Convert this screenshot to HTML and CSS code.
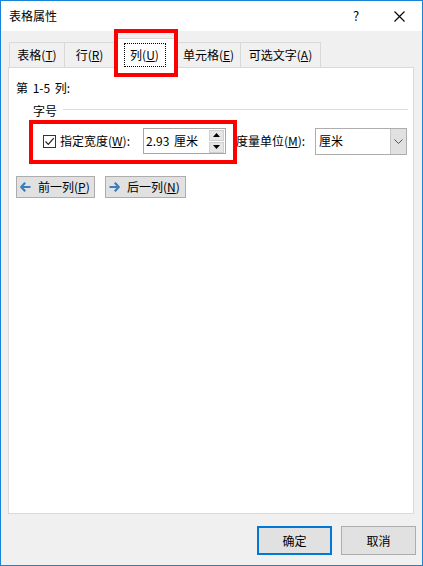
FILE: index.html
```html
<!DOCTYPE html>
<html lang="zh-CN">
<head>
  <meta charset="UTF-8">
  <title>表格属性</title>
  <link rel="stylesheet" href="styles.css">
</head>
<body>
  <div class="window">
    <div class="titlebar">
      <span class="title">表格属性</span>
      <span class="help">?</span>
      <span class="close">
        <svg width="11" height="11" viewBox="0 0 11 11"><path d="M0.5 0.5L10.5 10.5M10.5 0.5L0.5 10.5" stroke="#000" stroke-width="1.1" fill="none"/></svg>
      </span>
    </div>

    <div class="client">
      <div class="tabs">
        <div class="tab t1">表格(<u>T</u>)</div>
        <div class="tab t2">行(<u>R</u>)</div>
        <div class="tab active"><span class="focus">列(<u>U</u>)</span></div>
        <div class="tab t4">单元格(<u>E</u>)</div>
        <div class="tab t5">可选文字(<u>A</u>)</div>
      </div>

      <div class="panel">
        <div class="cols">第 1-5 列:</div>
        <div class="group">
          <span class="legend">字号</span>
          <span class="rule"></span>
        </div>
        <div class="width-row">
          <span class="check">
            <svg width="11" height="11" viewBox="0 0 11 11"><path d="M1.5 5.5L4.3 8.3L9.8 2.2" stroke="#222" stroke-width="1.2" fill="none"/></svg>
          </span>
          <span class="lbl lbl-w">指定宽度(<u>W</u>):</span>
          <div class="spin">
            <span class="spin-val">2.93 厘米</span>
            <div class="spin-btns">
              <span class="spin-btn"><svg width="7" height="4" viewBox="0 0 7 4"><path d="M0 4L3.5 0L7 4Z" fill="#000"/></svg></span>
              <span class="spin-btn"><svg width="7" height="4" viewBox="0 0 7 4"><path d="M0 0L3.5 4L7 0Z" fill="#000"/></svg></span>
            </div>
          </div>
          <span class="lbl lbl-m">度量单位(<u>M</u>):</span>
          <div class="select">
            <span class="select-val">厘米</span>
            <span class="select-btn"><svg width="9" height="5" viewBox="0 0 9 5"><path d="M0.5 0.5L4.5 4.5L8.5 0.5" stroke="#555" stroke-width="1" fill="none"/></svg></span>
          </div>
        </div>
        <div class="nav-row">
          <button class="nav prev">
            <svg width="11" height="10" viewBox="0 0 11 10"><path d="M5.2 0.7L1.2 5L5.2 9.3M1.5 5H10.5" stroke="#3d7ec0" stroke-width="2.2" fill="none"/></svg>
            <span>前一列(<u>P</u>)</span>
          </button>
          <button class="nav next">
            <svg width="11" height="10" viewBox="0 0 11 10"><path d="M5.8 0.7L9.8 5L5.8 9.3M9.5 5H0.5" stroke="#3d7ec0" stroke-width="2.2" fill="none"/></svg>
            <span>后一列(<u>N</u>)</span>
          </button>
        </div>
      </div>

      <div class="footer">
        <button class="btn ok">确定</button>
        <button class="btn">取消</button>
      </div>
    </div>

    <div class="mark mark-tab"></div>
    <div class="mark mark-width"></div>
  </div>
</body>
</html>
```

FILE: styles.css
```css
* { box-sizing: border-box; margin: 0; padding: 0; }
body {
  font-family: "Noto Sans CJK SC", "Noto Sans", sans-serif;
  font-size: 12px;
  color: #000;
  background: #fff;
}
u { text-decoration: underline; text-underline-offset: 1px; }

.window {
  position: relative;
  width: 423px;
  height: 566px;
  border: 1px solid #1883d7;
  background: #f0f0f0;
  display: flex;
  flex-direction: column;
}

.titlebar {
  height: 30px;
  background: #fff;
  display: flex;
  align-items: center;
  padding-left: 8px;
  line-height: 16px;
}
.title { flex: 1; }
.help { width: 14px; margin-right: 27px; font-size: 13px; }
.close { width: 11px; height: 11px; margin-right: 17px; display: flex; }

.client {
  flex: 1;
  padding: 11px 7px 0 7px;
  display: flex;
  flex-direction: column;
}

.tabs {
  height: 25px;
  display: flex;
  align-items: flex-end;
  padding-left: 1px;
}
.tab {
  height: 25px;
  line-height: 24px;
  text-align: center;
  border-top: 1px solid #d9d9d9;
  border-left: 1px solid #d9d9d9;
  background: #f0f0f0;
}
.t1 { width: 55px; }
.t2 { width: 50px; }
.t4 { width: 64px; }
.t5 { width: 81px; border-right: 1px solid #d9d9d9; }
.tab.active {
  width: 62px;
  height: 30px;
  margin-bottom: -1px;
  position: relative;
  z-index: 1;
  background: #fff;
  border-right: 1px solid #d9d9d9;
  padding-top: 4px;
  line-height: 16px;
}
.focus {
  display: inline-block;
  padding: 3px 6px 3px 5px;
  border: 1px dotted #000;
}

.panel {
  width: 406px;
  height: 447px;
  background: #fff;
  border: 1px solid #d9d9d9;
  padding: 12px 5px 0 7px;
  line-height: 16px;
}
.cols { word-spacing: 2px; }

.group {
  display: flex;
  align-items: center;
  margin: 7px 0 0 17px;
}
.legend { margin-right: 6px; }
.rule { flex: 1; height: 1px; background: #dcdcdc; margin-top: -3px; }

.width-row {
  display: flex;
  align-items: center;
  height: 26px;
  margin: 9px 0 0 27px;
}
.check {
  width: 13px;
  height: 13px;
  border: 1px solid #333;
  display: flex;
  align-items: center;
  justify-content: center;
  margin-right: 4px;
}
.lbl { white-space: nowrap; }
.lbl-w { width: 83px; }
.lbl-m { width: 79px; margin-left: 10px; }

.spin {
  width: 83px;
  height: 26px;
  border: 1px solid #a6a6a6;
  display: flex;
  align-items: center;
  padding: 0 1px 0 2px;
}
.spin-val { flex: 1; word-spacing: 2px; }
.spin-btns {
  width: 15px;
  display: flex;
  flex-direction: column;
  gap: 1px;
}
.spin-btn {
  height: 11px;
  background: #e6e6e6;
  border: 1px solid #cfcfcf;
  display: flex;
  align-items: center;
  justify-content: center;
}

.select {
  width: 92px;
  height: 27px;
  border: 1px solid #adadad;
  display: flex;
  align-items: stretch;
}
.select-val { flex: 1; padding-left: 3px; display: flex; align-items: center; }
.select-btn {
  width: 16px;
  background: #e1e1e1;
  border-left: 1px solid #c8c8c8;
  display: flex;
  align-items: center;
  justify-content: center;
}

.nav-row {
  display: flex;
  gap: 10px;
  margin-top: 22px;
}
.nav {
  height: 22px;
  display: flex;
  align-items: center;
  gap: 7px;
  font: inherit;
  line-height: 16px;
  white-space: nowrap;
  background: #e1e1e1;
  border: 1px solid #adadad;
  color: #000;
}
.prev { width: 79px; padding-left: 3px; }
.next { width: 81px; padding-left: 3px; }

.footer {
  display: flex;
  justify-content: flex-end;
  gap: 9px;
  margin-top: 12px;
  margin-right: -1px;
}
.btn {
  width: 75px;
  height: 29px;
  font: inherit;
  background: #e1e1e1;
  border: 1px solid #adadad;
  color: #000;
}
.btn.ok { border: 2px solid #0078d7; }

.mark {
  position: absolute;
  border: 4px solid #ff0000;
  z-index: 5;
}
.mark-tab { left: 113px; top: 28px; width: 64px; height: 48px; }
.mark-width { left: 28px; top: 119px; width: 208px; height: 44px; }
```
